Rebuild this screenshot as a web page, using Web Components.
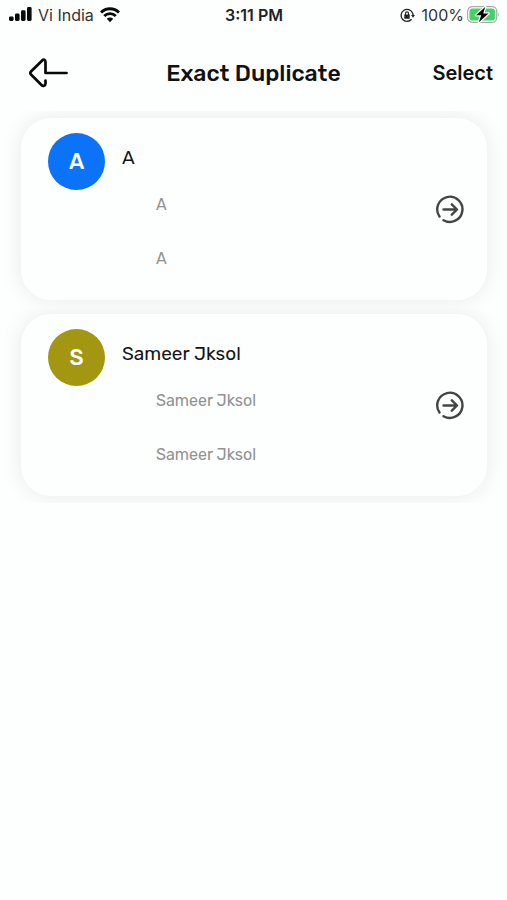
<!DOCTYPE html>
<html lang="en">
<head>
<meta charset="utf-8">
<meta name="viewport" content="width=device-width, initial-scale=1">
<title>Exact Duplicate</title>
<style>
body { margin: 0; background: #fdfefe; color: #111; font-family: Rubik, Inter, "Liberation Sans", sans-serif; }
</style>
</head>
<body>
<duplicates-screen></duplicates-screen>
<script>
const define = (name, html, setup) => customElements.define(name, class extends HTMLElement {
  constructor() {
    super();
    const template = document.createElement('template');
    template.innerHTML = html;
    this.attachShadow({ mode: 'open' }).append(template.content.cloneNode(true));
  }
  connectedCallback() { if (setup) setup(this, this.shadowRoot); }
});

define('status-bar', `
<style>
:host { display: grid; grid-template-columns: 1fr auto 1fr; align-items: center; height: 30px; padding: 0 7px 0 8px; font: 16px/20px Inter, sans-serif; color: #333; }
div { display: flex; align-items: center; }
.right { justify-content: flex-end; }
.signal { margin-right: 6px; }
.wifi { margin-left: 6px; }
.lock { margin-right: 7px; }
.battery { margin-left: 3px; }
time { font-weight: 600; color: #222; }
svg { flex: none; display: block; }
</style>
<div>
  <svg class="signal" width="24" height="16" viewBox="0 0 24 16" fill="#080808" aria-label="Signal"><rect x="1" y="9.500" width="4.600" height="4.500" rx="1.400"/><rect x="7" y="6.500" width="4.600" height="7.500" rx="1.400"/><rect x="13" y="3.300" width="4.600" height="10.700" rx="1.400"/><rect x="19" y="0" width="4.600" height="14" rx="1.400"/></svg>
  <span>Vi India</span>
  <svg class="wifi" width="20" height="16" viewBox="0 0 20 16" aria-label="Wi-Fi"><g fill="none" stroke="#080808" stroke-width="2.800"><path d="M1 5.500C6 .5 14 .5 19 5.500M4.200 9.100C7.500 5.800 12.500 5.800 15.800 9.100"/></g><path fill="#080808" d="M6.800 11.800Q10 9.200 13.200 11.800L10 15.200Z"/></svg>
</div>
<time>3:11 PM</time>
<div class="right">
  <svg class="lock" width="15" height="15" viewBox="0 0 15 15" aria-label="Rotation lock"><path d="M12.600 5A6 6 0 1 0 11.600 11.300M12.600 5Q13.100 6 13.100 7.500" fill="none" stroke="#222" stroke-width="1.300"/><path d="M11 7h4l-2 2.700zM4.300 6.500h5.400v4.200h-5.400z" fill="#222"/><path d="M5.500 7V5.400a1.500 1.500 0 0 1 3 0V7" fill="none" stroke="#222" stroke-width="1.100"/></svg>
  <span>100%</span>
  <svg class="battery" width="33" height="18" viewBox="0 0 33 18" aria-label="Charging"><rect x=".7" y=".7" width="29" height="15.600" rx="4.500" fill="#fff" stroke="#aaa" stroke-width="1.200"/><rect x="2.500" y="2.500" width="25.400" height="12" rx="2.800" fill="#42d267"/><path d="M30.800 6q2 2.500 0 5z" fill="#aaa"/><path d="M18.200 1L9 9.300h5.200L11.800 16.300L21.600 7.500h-5.400z" fill="#000" stroke="#fff" stroke-width="2.400" paint-order="stroke" stroke-linejoin="round"/></svg>
</div>`);

define('nav-header', `
<style>
:host { display: grid; grid-template-columns: 1fr auto 1fr; align-items: center; padding: 23px 14px 18px 28px; }
button { border: 0; padding: 0; background: none; color: #111; font: 600 20px/40px Inter, sans-serif; cursor: pointer; }
.back { justify-self: start; }
.select { justify-self: end; }
h1 { margin: 0 0 0 -14px; font-size: 23px; line-height: 40px; font-weight: 500; white-space: nowrap; color: #111; }
svg { display: block; }
</style>
<button class="back" aria-label="Back"><svg width="41" height="30" viewBox="0 0 41 30" fill="none" stroke="#080808" stroke-width="2.700" stroke-linecap="round" stroke-linejoin="round"><path d="M38.500 15H17.500V4C17.500 1.500 15.500 1.200 14.200 2.500L3 13.500Q1.500 15 3 16.500L13.500 27C15 28.500 17.500 28 17.500 25.500V22.500"/></svg></button>
<h1><slot></slot></h1>
<button class="select">Select</button>`);

define('contact-avatar', `
<style>
:host { display: grid; place-items: center; width: 57px; height: 57px; border-radius: 50%; background: var(--avatar-color); color: #fff; font-size: 22px; font-weight: 500; line-height: 28px; }
</style><slot></slot>`);

define('duplicate-card', `
<style>
:host { display: block; padding: 7px 20px 7px 21px; overflow: hidden; }
article { display: grid; grid-template-columns: auto 1fr auto; column-gap: 17px; align-items: center; padding: 15px 22px 14px 27px; border-radius: 30px; background: #fdfefe; box-shadow: 0 0 22px rgba(0,0,0,.085); }
contact-avatar { align-self: start; }
.text { display: flex; flex-direction: column; }
h2 { margin: 0; font-size: 19px; line-height: 24px; font-weight: 400; padding: 13px 0 8px; color: #151515; }
ul { list-style: none; margin: 0; padding: 0 0 0 34px; font-size: 16px; line-height: 54px; color: #929292; }
button { border: 0; padding: 0; background: none; cursor: pointer; }
svg { display: block; }
</style>
<article>
  <contact-avatar></contact-avatar>
  <div class="text"><h2></h2><ul><li></li><li></li></ul></div>
  <button aria-label="Open duplicates"><svg width="30" height="30" viewBox="0 0 30 30" fill="none" stroke="#444" stroke-width="2.400" stroke-linecap="round" stroke-linejoin="round"><path d="M4.500 21.500A12.600 12.600 0 1 1 8.500 25.200M8.500 14.500H21.500M16.800 9.300L22 14.500L16.800 19.700"/></svg></button>
</article>`, (host, root) => {
  const name = host.getAttribute('name');
  const avatar = root.querySelector('contact-avatar');
  avatar.textContent = name[0];
  avatar.style.setProperty('--avatar-color', host.getAttribute('color'));
  root.querySelectorAll('h2, li').forEach(el => { el.textContent = name; });
});

define('duplicates-screen', `
<style>:host { display: block; min-height: 100vh; } main { display: block; }</style>
<status-bar></status-bar>
<nav-header>Exact Duplicate</nav-header>
<main>
  <duplicate-card name="A" color="#0b73f8"></duplicate-card>
  <duplicate-card name="Sameer Jksol" color="#a39611"></duplicate-card>
</main>`);
</script>
</body>
</html>
